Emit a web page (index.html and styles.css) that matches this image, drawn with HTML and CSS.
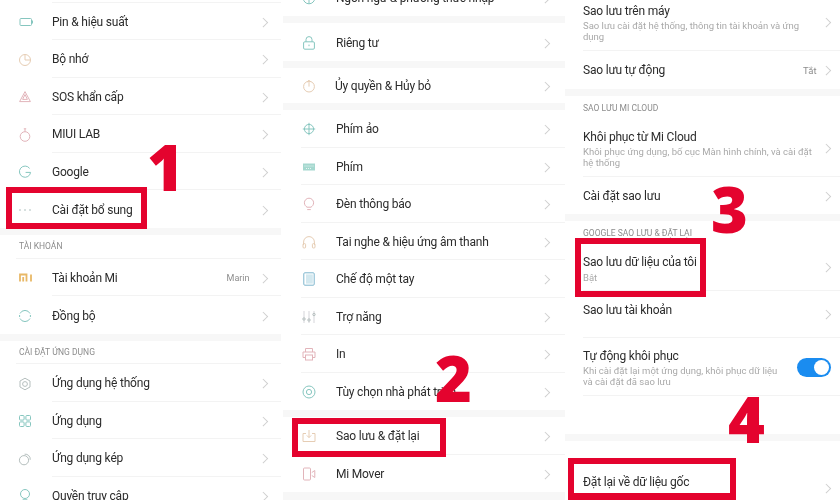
FILE: index.html
```html
<!DOCTYPE html>
<html lang="vi">
<head>
<meta charset="utf-8">
<title>Đặt lại về dữ liệu gốc</title>
<link rel="stylesheet" href="styles.css">
</head>
<body>
<div class="page">
  <section class="col col-a">
    <div class="stub"></div>
    <div class="row"><span class="ico"><svg viewBox="0 0 16 16"><rect x="3" y="4.500" width="11.500" height="7" rx="1" class="teal"/><path d="M15.500 6.500v3" class="teal"/></svg></span><div class="body"><span class="title">Pin &amp; hiệu suất</span><i class="chev"></i></div></div>
    <div class="row"><span class="ico"><svg viewBox="0 0 16 16"><circle cx="8" cy="8" r="5.500" class="tan"/><path d="M8 2.500V8h5.500" class="tan"/></svg></span><div class="body"><span class="title">Bộ nhớ</span><i class="chev"></i></div></div>
    <div class="row"><span class="ico"><svg viewBox="0 0 16 16"><path d="M8 2.600L13.400 12.600H2.600Z" class="pink"/><path d="M8 5.500L10.400 10.400H5.600Z" class="pink"/></svg></span><div class="body"><span class="title">SOS khẩn cấp</span><i class="chev"></i></div></div>
    <div class="row"><span class="ico"><svg viewBox="0 0 16 16"><circle cx="8" cy="9.500" r="4.800" class="pink"/><path d="M6.800 1.800h2.400M8 1.800v2.900" class="pink"/></svg></span><div class="body"><span class="title">MIUI LAB</span><i class="chev"></i></div></div>
    <div class="row"><span class="ico"><svg viewBox="0 0 16 16"><path d="M12.600 4.400A5.600 5.600 0 1 0 13.600 8.400H8.600" class="teal"/></svg></span><div class="body"><span class="title">Google</span><i class="chev"></i></div></div>
    <div class="row last"><span class="ico"><svg viewBox="0 0 16 16"><circle cx="3" cy="8" r=".7" class="dot"/><circle cx="8" cy="8" r=".7" class="dot"/><circle cx="13" cy="8" r=".7" class="dot"/></svg></span><div class="body"><span class="title">Cài đặt bổ sung</span><i class="chev"></i></div></div>
    <div class="band"></div>
    <div class="head">TÀI KHOẢN</div>
    <div class="row"><span class="ico"><svg viewBox="0 0 16 16"><path d="M3 11.500V4.500H9.500V11.500M6.200 7V11.500M14 4.500V11.500" class="gold"/></svg></span><div class="body"><span class="title">Tài khoản Mi</span><span class="val">Marin</span><i class="chev"></i></div></div>
    <div class="row last"><span class="ico"><svg viewBox="0 0 16 16"><path d="M3 5.500A5.600 5.600 0 0 1 13 5.500M13 10.500A5.600 5.600 0 0 1 3 10.500M2.600 7v2M13.400 7v2" class="teal"/></svg></span><div class="body"><span class="title">Đồng bộ</span><i class="chev"></i></div></div>
    <div class="band wide"></div>
    <div class="head short">CÀI ĐẶT ỨNG DỤNG</div>
    <div class="row"><span class="ico"><svg viewBox="0 0 16 16"><path d="M8 2.200L13 5v6l-5 2.800L3 11V5Z" class="grey"/><circle cx="8" cy="8" r="2.400" class="grey"/></svg></span><div class="body"><span class="title">Ứng dụng hệ thống</span><i class="chev"></i></div></div>
    <div class="row"><span class="ico"><svg viewBox="0 0 16 16"><rect x="2.500" y="2.500" width="4.600" height="4.600" rx="1" class="teal"/><rect x="8.900" y="2.500" width="4.600" height="4.600" rx="1" class="teal"/><rect x="2.500" y="8.900" width="4.600" height="4.600" rx="1" class="teal"/><rect x="8.900" y="8.900" width="4.600" height="4.600" rx="1" class="teal"/></svg></span><div class="body"><span class="title">Ứng dụng</span><i class="chev"></i></div></div>
    <div class="row"><span class="ico"><svg viewBox="0 0 16 16"><circle cx="7" cy="9.200" r="4.600" class="grey"/><path d="M7.600 3.200A5 5 0 0 1 13.200 8.800" class="grey"/></svg></span><div class="body"><span class="title">Ứng dụng kép</span><i class="chev"></i></div></div>
    <div class="row last"><span class="ico"><svg viewBox="0 0 16 16"><circle cx="8" cy="6" r="4.500" class="teal"/><path d="M5.800 11.800h4.400v3H5.800Z" class="teal"/></svg></span><div class="body"><span class="title">Quyền truy cập</span><i class="chev"></i></div></div>
  </section>

  <section class="col col-b">
    <div class="row last top"><span class="ico"><svg viewBox="0 0 16 16"><circle cx="8" cy="8" r="5.800" class="teal"/><path d="M2.200 8h11.600M8 2.200v11.600" class="teal"/></svg></span><div class="body"><span class="title">Ngôn ngữ &amp; phương thức nhập</span><i class="chev"></i></div></div>
    <div class="band"></div>
    <div class="row last"><span class="ico"><svg viewBox="0 0 16 16"><rect x="2.600" y="6.800" width="10.800" height="7.400" rx="1.200" class="teal"/><path d="M5 6.800V4.600a3 3 0 0 1 6 0v2.200M8 9.600v1.600" class="teal"/></svg></span><div class="body"><span class="title">Riêng tư</span><i class="chev"></i></div></div>
    <div class="band"></div>
    <div class="row last short"><span class="ico"><svg viewBox="0 0 16 16"><circle cx="8" cy="8.600" r="5.400" class="tan"/><path d="M8 2v6.600M6.200 4.200L8 2.400l1.800 1.800" class="tan"/></svg></span><div class="body"><span class="title nudge">Ủy quyền &amp; Hủy bỏ</span><i class="chev"></i></div></div>
    <div class="band"></div>
    <div class="row"><span class="ico"><svg viewBox="0 0 16 16"><circle cx="8" cy="8" r="4.600" class="teal"/><path d="M8 1.800v12.400M1.800 8h12.400" class="teal"/></svg></span><div class="body"><span class="title">Phím ảo</span><i class="chev"></i></div></div>
    <div class="row"><span class="ico"><svg viewBox="0 0 16 16"><rect x="2" y="4.500" width="12" height="7" class="fill-teal"/><path d="M3.500 7h9M5 9.500h6" class="white"/></svg></span><div class="body"><span class="title">Phím</span><i class="chev"></i></div></div>
    <div class="row"><span class="ico"><svg viewBox="0 0 16 16"><path d="M6 11.200C4.600 10.200 3.400 8.800 3.400 6.800a4.600 4.600 0 0 1 9.200 0c0 2-1.200 3.400-2.600 4.400ZM6.200 13.600h3.600" class="pink"/></svg></span><div class="body"><span class="title">Đèn thông báo</span><i class="chev"></i></div></div>
    <div class="row"><span class="ico"><svg viewBox="0 0 16 16"><path d="M2.600 11V8a5.400 5.400 0 0 1 10.800 0v3" class="tan"/><rect x="2" y="9.600" width="2.600" height="4.400" rx="1" class="tan"/><rect x="11.400" y="9.600" width="2.600" height="4.400" rx="1" class="tan"/></svg></span><div class="body"><span class="title">Tai nghe &amp; hiệu ứng âm thanh</span><i class="chev"></i></div></div>
    <div class="row"><span class="ico"><svg viewBox="0 0 16 16"><rect x="2.800" y="1.800" width="10.400" height="12.400" rx="1" class="blue"/><rect x="5" y="3.400" width="6.800" height="9.200" class="fill-blue"/></svg></span><div class="body"><span class="title">Chế độ một tay</span><i class="chev"></i></div></div>
    <div class="row"><span class="ico"><svg viewBox="0 0 16 16"><path d="M3 2v12M8 2v12M13 2v12" class="lgrey"/><circle cx="3" cy="10" r="1.200" class="grey"/><circle cx="8" cy="11" r="1.200" class="grey"/><circle cx="13" cy="5.500" r="1.200" class="grey"/></svg></span><div class="body"><span class="title">Trợ năng</span><i class="chev"></i></div></div>
    <div class="row"><span class="ico"><svg viewBox="0 0 16 16"><path d="M4.200 11.500H2V6h12v5.500h-2.200M4.500 6V2.500h7V6" class="pink"/><rect x="4.500" y="9" width="7" height="5" class="pink"/></svg></span><div class="body"><span class="title">In</span><i class="chev"></i></div></div>
    <div class="row last"><span class="ico"><svg viewBox="0 0 16 16"><circle cx="8" cy="8" r="6" class="teal"/><circle cx="8" cy="8" r="2.600" class="teal"/></svg></span><div class="body"><span class="title">Tùy chọn nhà phát triển</span><i class="chev"></i></div></div>
    <div class="band"></div>
    <div class="row"><span class="ico"><svg viewBox="0 0 16 16"><path d="M5 5.500H2v8h12v-8h-3M8 2v7.500M5.800 7.400L8 9.600l2.200-2.200" class="tan"/></svg></span><div class="body"><span class="title">Sao lưu &amp; đặt lại</span><i class="chev"></i></div></div>
    <div class="row last"><span class="ico"><svg viewBox="0 0 16 16"><rect x="2.500" y="2" width="7" height="12" rx="1" class="pink"/><path d="M10.800 6.500l3-2v7l-3-2" class="pink"/></svg></span><div class="body"><span class="title">Mi Mover</span><i class="chev"></i></div></div>
    <div class="band fill"></div>
  </section>

  <section class="col col-c">
    <div class="row tall first"><div class="body"><div class="text"><span class="title">Sao lưu trên máy</span><span class="sub">Sao lưu cài đặt hệ thống, thông tin tài khoản và ứng dụng</span></div><i class="chev"></i></div></div>
    <div class="row last"><div class="body"><span class="title">Sao lưu tự động</span><span class="val">Tắt</span><i class="chev"></i></div></div>
    <div class="band"></div>
    <div class="head">SAO LƯU MI CLOUD</div>
    <div class="row tall"><div class="body"><div class="text"><span class="title">Khôi phục từ Mi Cloud</span><span class="sub">Khôi phục ứng dụng, bố cục Màn hình chính, và cài đặt hệ thống</span></div><i class="chev"></i></div></div>
    <div class="row last"><div class="body"><span class="title">Cài đặt sao lưu</span><i class="chev"></i></div></div>
    <div class="band"></div>
    <div class="head short">GOOGLE SAO LƯU &amp; ĐẶT LẠI</div>
    <div class="row mine"><div class="body"><div class="text"><span class="title">Sao lưu dữ liệu của tôi</span><span class="sub">Bật</span></div><i class="chev"></i></div></div>
    <div class="row acct"><div class="body"><span class="title">Sao lưu tài khoản</span><i class="chev"></i></div></div>
    <div class="row tall auto"><div class="body"><div class="text"><span class="title">Tự động khôi phục</span><span class="sub">Khi cài đặt lại một ứng dụng, khôi phục dữ liệu và cài đặt đã sao lưu</span></div><span class="toggle"><span class="knob"></span></span></div></div>
    <div class="gap"></div>
    <div class="band"></div>
    <div class="row last reset"><div class="body"><span class="title">Đặt lại về dữ liệu gốc</span><i class="chev"></i></div></div>
  </section>

  <div class="mark mark-1"></div>
  <div class="mark mark-2"></div>
  <div class="mark mark-3"></div>
  <div class="mark mark-4"></div>
  <span class="num num-1">1</span>
  <span class="num num-2">2</span>
  <span class="num num-3">3</span>
  <span class="num num-4">4</span>
</div>
</body>
</html>
```
FILE: styles.css
```css
* { box-sizing: border-box; }
html, body { margin: 0; padding: 0; background: #fff; }
.page {
  position: relative;
  width: 840px;
  height: 500px;
  overflow: hidden;
  display: grid;
  grid-template-columns: 281px 284px 275px;
  font-family: Roboto, "Liberation Sans", sans-serif;
  color: #2b2b2b;
  background: #fff;
  filter: blur(.3px);
}
.col { display: flex; flex-direction: column; height: 500px; overflow: hidden; min-width: 0; }
.col-b { margin-left: 2px; }

.stub { flex: none; height: 2.500px; margin-left: 52px; border-bottom: 1px solid #f3f3f3; }
.row { flex: none; display: flex; align-items: center; height: 37.500px; }
.body { flex: 1; min-width: 0; height: 100%; display: flex; align-items: center; padding-top: 2px; padding-right: 15px; }
.title { font-size: 12px; letter-spacing: -.2px; line-height: 16px; white-space: nowrap; flex: 1; }
.val { font-size: 9px; color: #8d8d8d; margin-right: 10px; }
.chev {
  flex: none;
  width: 6.500px;
  height: 6.500px;
  border-top: 1px solid #cfcfcf;
  border-right: 1px solid #cfcfcf;
  transform: rotate(45deg);
}
.ico { flex: none; display: flex; align-items: center; padding-top: 2px; }
.ico svg { width: 16px; height: 16px; }
svg * { fill: none; stroke-width: 1; }

.teal { stroke: #86c6bf; }
.tan { stroke: #e6cdb4; }
.pink { stroke: #e2b4ba; }
.grey { stroke: #b5bfbe; }
.lgrey { stroke: #d5d5da; }
svg .gold { stroke: #e8b866; stroke-width: 1.800; }
.blue { stroke: #7db5cd; }
svg .fill-blue { fill: #d3e8ef; stroke: none; }
svg .fill-teal { fill: #a5d8cf; stroke: none; }
.white { stroke: #e8f5f2; stroke-dasharray: 1 1; }
svg .dot { fill: #90a8a6; stroke: none; }

.band { flex: none; height: 7px; background: #f7f7f7; }
.band.wide { height: 7.500px; }
.band.fill { flex: 1; }
.head {
  flex: none;
  height: 24px;
  display: flex;
  align-items: center;
  font-size: 8.500px;
  color: #8c8c8c;
  border-bottom: 1px solid #f3f3f3;
}
.head.short { height: 23px; }

.col-a .ico { width: 52px; padding-left: 17px; }
.col-a .body { border-bottom: 1px solid #f3f3f3; }
.col-a .last .body { border-bottom: 0; }
.col-a .head { margin-left: 16px; padding-left: 3px; }

.col-b .row { margin-left: 18px; border-bottom: 1px solid #f3f3f3; }
.col-b .row.last { border-bottom: 0; }
.col-b .row.short { height: 35.500px; }
.col-b .top { margin-top: -21.500px; }
.col-b .ico { width: 35px; }
.col-b .body { padding-right: 17px; }
.nudge { margin-left: -1px; }

.col-c .row { margin-left: 18px; border-bottom: 1px solid #f3f3f3; }
.col-c .row.last { border-bottom: 0; }
.col-c .head { margin-left: 18px; border-bottom: 0; }
.col-c .body { padding-right: 11px; padding-top: 1px; }
.col-c .row.tall { height: 57px; }
.col-c .row.first { margin-top: -6px; }
.col-c .row.auto { height: 58px; }
.col-c .row.mine { height: 47px; }
.col-c .row.mine .text { padding-top: 1px; }
.col-c .row.mine .sub { margin-top: 1px; }
.col-c .row.acct { height: 47px; }
.col-c .row.acct .title { position: relative; top: -5px; }
.col-c .row.reset { height: 59px; }
.col-c .row.reset .body { padding-top: 35px; }
.col-c .row.reset .title { position: relative; top: -6px; }
.gap { flex: none; height: 38px; }
.text { flex: 1; min-width: 0; max-width: 230px; margin-right: auto; display: flex; flex-direction: column; }
.text .title { flex: none; line-height: 17px; }
.sub { font-size: 9.500px; line-height: 11px; color: #a9a9a9; }
.col-c .auto .text { padding-right: 10px; }
.toggle {
  flex: none;
  width: 34px;
  height: 19px;
  border-radius: 10px;
  background: #1a8cf0;
  display: flex;
  align-items: center;
  justify-content: flex-end;
  padding-right: 2px;
  margin-right: -2px;
}
.knob { width: 15px; height: 15px; border-radius: 50%; background: #fff; }
.col-c .val { font-size: 9.500px; margin-right: 6px; }

.mark { position: absolute; border: 6.500px solid #e4032e; }
.mark-1 { left: 6px; top: 187px; width: 141px; height: 42px; }
.mark-2 { left: 292px; top: 418px; width: 154px; height: 39px; }
.mark-3 { left: 575px; top: 238px; width: 131px; height: 59px; }
.mark-4 { left: 568px; top: 458px; width: 168px; height: 42px; border-bottom-width: 7px; }
.num {
  position: absolute;
  font-family: "Open Sans", "Liberation Sans", sans-serif;
  font-weight: 800;
  font-size: 63px;
  line-height: 68px;
  color: #e4032e;
}
.num-1 { left: 147px; top: 133px; }
.num-2 { left: 435px; top: 344px; }
.num-3 { left: 711px; top: 175px; }
.num-4 { left: 728px; top: 385px; }
```
